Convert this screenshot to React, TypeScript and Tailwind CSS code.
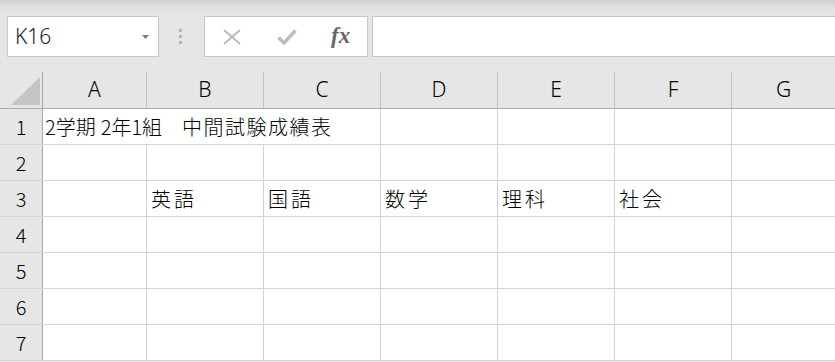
import React from 'react';

// anchos de columna tomados de la captura (incluyen el borde derecho)
const cols = [
  { name: 'A', w: 'w-[104px]' },
  { name: 'B', w: 'w-[117px]' },
  { name: 'C', w: 'w-[117px]' },
  { name: 'D', w: 'w-[117px]' },
  { name: 'E', w: 'w-[117px]' },
  { name: 'F', w: 'w-[117px]' },
  { name: 'G', w: 'w-[104px]' },
];

const labels = ['', '英語', '国語', '数学', '理科', '社会', ''];

const jp = "font-['Noto_Sans_CJK_JP','Noto_Sans',sans-serif]";

const RowHead = ({ n }: { n: number }) => (
  <div className="w-[43px] shrink-0 h-full flex items-center justify-center border-r border-[#a8a8a8] bg-[#e6e6e6] text-[20px] font-light text-black">
    {n}
  </div>
);

const Cell = ({ w, children, pad = 'pl-[4px]' }: { w: string; children?: React.ReactNode; pad?: string }) => (
  <div className={`${w} shrink-0 h-full border-r border-[#d4d4d4] flex items-center ${pad} whitespace-nowrap`}>
    {children}
  </div>
);

export default function App() {
  return (
    <div className={`w-[835px] h-[362px] overflow-hidden bg-[#e6e6e6] ${jp}`}>
      {/* sombra de la cinta de arriba */}
      <div className="h-[16px] bg-linear-to-b from-[#cfcfcf] via-[#e3e3e3] to-[#e6e6e6]" />

      {/* barra de formulas */}
      <div className="h-[41px] flex pl-[7px]">
        <div className="w-[152px] h-full bg-white border border-[#c6c6c6] flex items-center justify-between pl-[7px] pr-[9px]">
          <span className="text-[21px] font-light text-[#222] font-['Noto_Sans',sans-serif]">K16</span>
          <svg width="7" height="4" viewBox="0 0 7 4"><path d="M0 0h7L3.5 4z" fill="#7a7a7a" /></svg>
        </div>
        <div className="w-[45px] flex flex-col items-center justify-center gap-[3px] pr-[3px]">
          <span className="w-[3px] h-[3px] bg-[#b3b3b3]" />
          <span className="w-[3px] h-[3px] bg-[#b3b3b3]" />
          <span className="w-[3px] h-[3px] bg-[#b3b3b3]" />
        </div>
        <div className="w-[164px] h-full bg-white border border-[#c6c6c6] flex items-center pl-[18px]">
          <svg width="18" height="16" viewBox="0 0 18 16">
            <path d="M1 1l16 14M17 1L1 15" stroke="#b9b9b9" strokeWidth="2" fill="none" />
          </svg>
          <svg width="20" height="16" viewBox="0 0 20 16" className="ml-[36px]">
            <path d="M1.5 8.5l5.5 5.5L18.5 1.5" stroke="#bdbdbd" strokeWidth="3.5" fill="none" />
          </svg>
          <span className="ml-[34px] text-[23px] leading-none italic font-semibold text-[#676767] font-['Liberation_Serif',serif] -mt-[2px]">
            fx
          </span>
        </div>
        <div className="flex-1 h-full ml-[4px] -mr-[2px] bg-white border border-[#c6c6c6]" />
      </div>

      <div className="h-[15px]" />

      {/* cabecera de columnas */}
      <div className="h-[37px] flex border-b border-[#ababab]">
        <div className="w-[43px] shrink-0 h-full border-r border-[#a8a8a8] flex items-end justify-end pr-[2px] pb-[3px]">
          <svg width="29" height="28" viewBox="0 0 29 28"><path d="M29 0V28H0z" fill="#c4c4c4" /></svg>
        </div>
        {cols.map(c => (
          <div key={c.name} className={`${c.w} shrink-0 h-full border-r border-[#c2c2c2] flex items-center justify-center text-[21px] font-light text-black font-['Noto_Sans',sans-serif]`}>
            {c.name}
          </div>
        ))}
      </div>

      {/* filas */}
      <div className="bg-white">
        {[1, 2, 3, 4, 5, 6, 7].map(n => (
          <div key={n} className="h-[36px] flex border-b border-[#d4d4d4] text-[20px] font-light text-black">
            <RowHead n={n} />
            {n === 1 ? (
              <>
                <Cell w="w-[338px]" pad="pl-[2px]">
                  <span>2学期</span>
                  <span className="ml-[5px]">2年1組</span>
                  <span className="ml-[20px] tracking-[1.5px]">中間試験成績表</span>
                </Cell>
                {cols.slice(3).map(c => <Cell key={c.name} w={c.w} />)}
              </>
            ) : (
              cols.map((c, i) => (
                <Cell key={c.name} w={c.w}>
                  {n === 3 ? <span className="tracking-[3px]">{labels[i]}</span> : null}
                </Cell>
              ))
            )}
          </div>
        ))}
      </div>
    </div>
  );
}
